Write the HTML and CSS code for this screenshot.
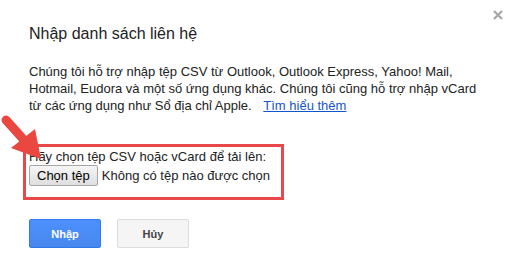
FILE: index.html
```html
<!DOCTYPE html>
<html lang="vi">
<head>
    <meta charset="UTF-8">
    <title>Nhập danh sách liên hệ</title>
    <link rel="stylesheet" href="styles.css">
</head>
<body>
    <div class="dialog">
        <span class="close" title="Đóng">
            <svg width="10" height="10" viewBox="0 0 10 10"><path d="M1 1L9 9M9 1L1 9" stroke="#a6a6a6" stroke-width="2.2"/></svg>
        </span>

        <h1>Nhập danh sách liên hệ</h1>

        <p class="intro">Chúng tôi hỗ trợ nhập tệp CSV từ Outlook, Outlook Express, Yahoo! Mail, Hotmail, Eudora và một số ứng dụng khác. Chúng tôi cũng hỗ trợ nhập vCard từ các ứng dụng như Sổ địa chỉ Apple. <a href="#" class="learn">Tìm hiểu thêm</a></p>

        <div class="upload">
            <div class="label">Hãy chọn tệp CSV hoặc vCard để tải lên:</div>
            <div class="file-row">
                <button class="file-btn">Chọn tệp</button>
                <span>Không có tệp nào được chọn</span>
            </div>
        </div>

        <div class="actions">
            <button class="btn primary">Nhập</button>
            <button class="btn">Hủy</button>
        </div>

        <!-- annotation arrow -->
        <svg class="arrow" width="50" height="60" viewBox="0 110 50 60">
            <line x1="6" y1="120" x2="24" y2="140" stroke="#e9473f" stroke-width="9" stroke-linecap="round"/>
            <polygon points="11,148 35,129 41,159" fill="#e9473f"/>
        </svg>
    </div>
</body>
</html>
```

FILE: styles.css
```css
body { margin: 0; background: #fff; font-family: "Liberation Sans", Arial, sans-serif; color: #222; }
.dialog { position: relative; padding: 24px 29px 0; }
.close { position: absolute; top: 10px; right: 8px; line-height: 0; }
h1 { margin: 0; font-size: 16px; line-height: 20px; font-weight: normal; color: #222; }
.intro { margin: 19px 0 0; font-size: 13px; line-height: 17px; }
.learn { color: #15c; margin-left: 8px; }
.upload { display: inline-block; margin: 30px 0 0 -6px; padding: 1px 11px 11px 3px; border: 3px solid #e9484a; font-size: 13px; line-height: 17px; }
.file-row { display: flex; align-items: center; gap: 4px; }
.file-btn { height: 21px; padding: 0 7px; font: 13px "Liberation Sans", Arial, sans-serif; color: #000; background: linear-gradient(#f6f6f6, #dedede); border: 1px solid #a6a6a6; border-radius: 2px; }
.actions { display: flex; gap: 16px; margin-top: 19px; }
.btn { min-width: 72px; height: 29px; padding: 0 8px; font: bold 11px "Liberation Sans", Arial, sans-serif; color: #444; background: #f5f5f5; border: 1px solid #dcdcdc; border-radius: 2px; }
.btn.primary { color: #fff; background: linear-gradient(#4d90fe, #4787ed); border-color: #3079ed; }
.arrow { position: absolute; left: 0; top: 110px; }
```
